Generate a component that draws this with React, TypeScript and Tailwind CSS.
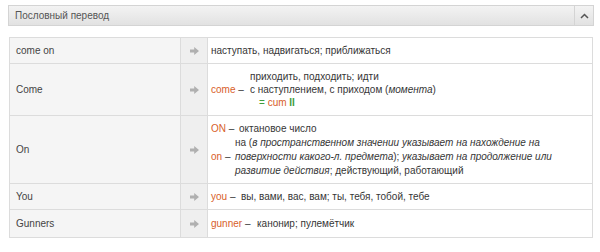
import React from "react";

const ORANGE = "text-[#d8602a]";
const GREEN = "text-[#3f9e3a]";

function Arrow() {
  return (
    <svg width="9" height="8" viewBox="0 0 9 8" className="block">
      <path d="M0 2.6 H4.2 V0 L9 4 L4.2 8 V5.4 H0 Z" fill="#b0b0b0" />
    </svg>
  );
}

function Row({ word, h, children, last }: { word: string; h: string; children: React.ReactNode; last?: boolean }) {
  return (
    <div className={`flex ${h} ${last ? "" : "border-b border-[#dcdcdc]"}`}>
      <div className="flex w-[171px] shrink-0 items-center border-r border-[#dcdcdc] bg-[#f5f5f5] pl-[6px] text-[#444]">
        {word}
      </div>
      <div className="flex w-[27px] shrink-0 items-center justify-center border-r border-[#dcdcdc] bg-[#efefef]">
        <Arrow />
      </div>
      <div className="flex flex-1 flex-col justify-center bg-white pl-[3px] text-[#363636]">{children}</div>
    </div>
  );
}

export default function App() {
  return (
    <div
      className="h-[252px] w-[600px] bg-white pl-[8px] pr-[6px] pt-[5px] text-[10px] leading-[13px]"
      style={{ fontFamily: '"Liberation Sans", Arial, sans-serif' }}
    >
      {/* section header */}
      <div className="flex h-[21px] items-stretch border border-[#d4d4d4] bg-gradient-to-b from-[#f3f3f3] to-[#e2e2e2]">
        <div className="flex flex-1 items-center pl-[6px] text-[#555]">Пословный перевод</div>
        <div className="flex w-[19px] items-center justify-center border-l border-[#d4d4d4]">
          <svg width="9" height="6" viewBox="0 0 9 6">
            <path d="M1 5 L4.5 1.5 L8 5" fill="none" stroke="#555" strokeWidth="1.5" />
          </svg>
        </div>
      </div>

      <div className="ml-[1px] mr-[1px] mt-[11px] border border-[#dcdcdc]">
        <Row word="come on" h="h-[26px]">
          <div>наступать, надвигаться; приближаться</div>
        </Row>

        <Row word="Come" h="h-[52px]">
          <div className="flex items-center">
            <span className={`inline-block w-[39px] shrink-0 ${ORANGE}`}>
              come <span className="text-[#363636]">–</span>
            </span>
            <div className="whitespace-nowrap">
              <div>приходить, подходить; идти</div>
              <div>
                с наступлением, с приходом (<i>момента</i>)
              </div>
              <div className="pl-[9px]">
                <span className={GREEN}>= </span>
                <span className={ORANGE}>cum</span>
                <span className={`${GREEN} font-bold`}> II</span>
              </div>
            </div>
          </div>
        </Row>

        <Row word="On" h="h-[68px]">
          <div className="leading-[14px]">
            <div className="flex items-center">
              <span className={`inline-block w-[28px] min-w-[28px] shrink-0 ${ORANGE}`}>
                ON <span className="text-[#363636]">–</span>
              </span>
              <span>октановое число</span>
            </div>
            <div className="flex items-center">
              <span className={`inline-block w-[24px] min-w-[24px] shrink-0 ${ORANGE}`}>
                on <span className="text-[#363636]">–</span>
              </span>
              <div className="whitespace-nowrap">
                на (<i>в пространственном значении указывает на нахождение на</i>
                <br />
                <i>поверхности какого-л. предмета</i>); <i>указывает на продолжение или</i>
                <br />
                <i>развитие действия</i>; действующий, работающий
              </div>
            </div>
          </div>
        </Row>

        <Row word="You" h="h-[26px]">
          <div className="flex items-center">
            <span className={`inline-block w-[30px] shrink-0 ${ORANGE}`}>
              you <span className="text-[#363636]">–</span>
            </span>
            <span>вы, вами, вас, вам; ты, тебя, тобой, тебе</span>
          </div>
        </Row>

        <Row word="Gunners" h="h-[27px]" last>
          <div className="flex items-center">
            <span className={`inline-block w-[46px] shrink-0 ${ORANGE}`}>
              gunner <span className="text-[#363636]">–</span>
            </span>
            <span>канонир; пулемётчик</span>
          </div>
        </Row>
      </div>
    </div>
  );
}
